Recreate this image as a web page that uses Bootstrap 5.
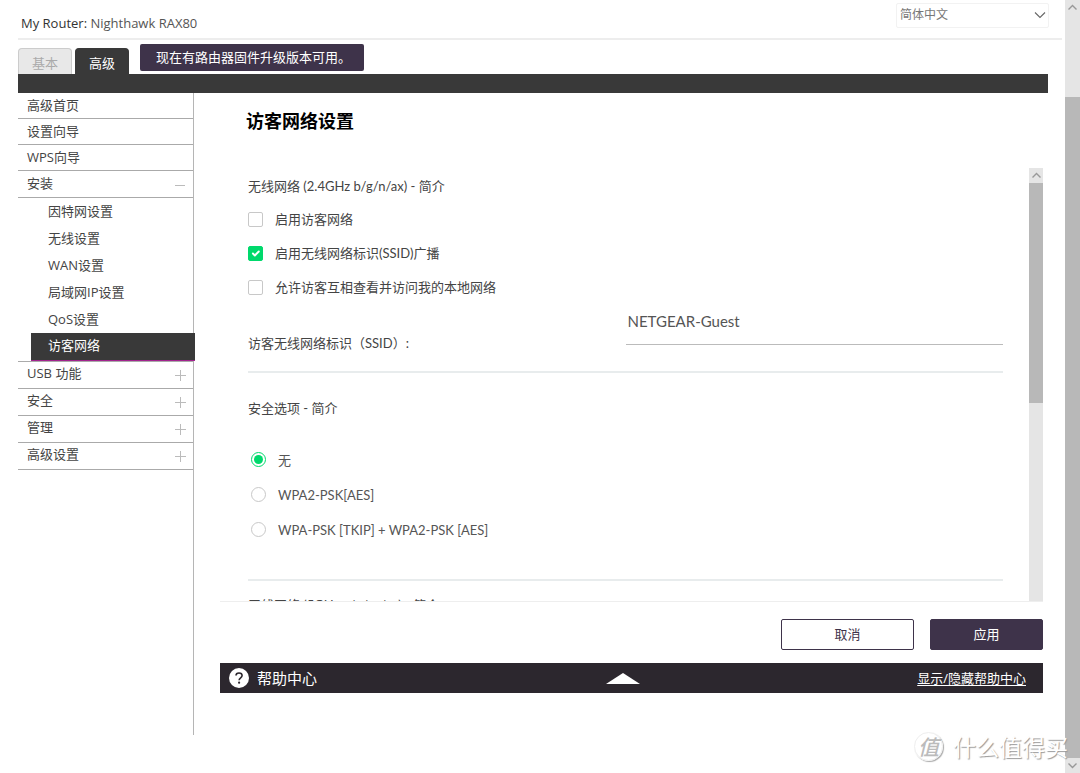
<!DOCTYPE html>
<html lang="zh-CN">
<head>
<meta charset="utf-8">
<meta name="viewport" content="width=device-width, initial-scale=1">
<title>NETGEAR Router</title>
<link href="https://cdn.jsdelivr.net/npm/bootstrap@5.3.0/dist/css/bootstrap.min.css" rel="stylesheet">
<style>
  :root { --plum: #3e334a; --coal: #393939; --green: #00d96c; }
  body { font: 13px/20px "Open Sans", "Noto Sans CJK SC", sans-serif; color: #444; background: #fff; }
  .shell { min-height: 100vh; }
  .pane { padding-left: 18px; padding-bottom: 38px; }

  .topbar { height: 40px; margin-right: 3px; padding: 3px 13px 10px 3px; border-bottom: 2px solid #ededed; }
  .topbar .model { padding-top: 10px; color: #333; }
  .topbar .model span { color: #555; }
  .lang { width: 153px; height: 25px; padding: 0 24px 2px 3px; font-size: 12px; color: #777; border: 1px solid #f2f2f2; border-radius: 2px;
    background-image: url("data:image/svg+xml,%3Csvg xmlns='http://www.w3.org/2000/svg' viewBox='0 0 12 12'%3E%3Cpath d='M1 3.5l5 5 5-5' fill='none' stroke='%23666' stroke-width='1.1'/%3E%3C/svg%3E");
    background-size: 12px 12px; background-position: right 2px top 5px; }

  .strip { margin-right: 17px; padding-top: 4px; border-bottom: 19px solid var(--coal); }
  .tab { width: 54px; height: 26px; margin-right: 3px; padding: 2px 0 0; border: 1px solid #ccc; border-bottom: 0; border-radius: 4px 4px 0 0; background: #e8e8e8; color: #aaa; }
  .tab.on { background: var(--coal); border-color: var(--coal); color: #fff; }
  .notice { width: 224px; height: 27px; margin: 0 0 3px 8px; padding: 3px 0 3px 16px; border-radius: 2px; background: var(--plum); color: #fff; }

  .side { width: 176px; border-right: 1px solid #b5b5b5; }
  .side a { display: flex; justify-content: space-between; align-items: center; color: #444; text-decoration: none; }
  .side .top { height: 26px; padding: 0 7px 2px 9px; border-bottom: 1px solid #aaa; }
  .side .group { height: 27px; }
  .side .group ~ .group { padding-bottom: 4px; }
  .side .after { height: 28px; border-top: 1px solid #aaa; }
  .side .sub { height: 27px; padding-left: 30px; padding-bottom: 2px; }
  .side .sub.on { height: 28px; margin-left: 13px; margin-right: -2px; padding-left: 17px; padding-bottom: 4px; background: var(--coal); border-bottom: 1px solid #a3238e; color: #fff; position: relative; }
  .side svg { width: 11px; height: 11px; margin-top: 4px; stroke: #bbb; fill: none; }

  .work { margin-left: 26px; margin-right: 22px; }
  .work h1 { height: 75px; margin: 0; padding: 14px 0 0 26px; font-size: 18px; line-height: 28px; font-weight: 700; color: #000; }
  .scroller { height: 434px; border-bottom: 1px solid #eee; }
  .fields { font-family: Lato, "Noto Sans CJK SC", sans-serif; padding: 0 26px 0 28px; }
  .fields h2 { margin: 0; font-size: 13px; line-height: 36px; font-weight: 400; }
  .fields .band { height: 34px; }
  .opt { height: 34px; }
  .opt .form-check-input { width: 15px; height: 15px; margin: 0 12px 0 0; border: 1px solid #c8c8c8; }
  .opt .form-check-input[type=checkbox] { border-radius: 2px; }
  .opt .form-check-input:checked { background-color: var(--green); border-color: var(--green); }
  .opt .form-check-input[type=radio]:checked { background: var(--green); background-clip: content-box; padding: 2px; }
  .radios { padding: 16px 0 32px 3px; color: #555; }
  .radios .opt { height: 35px; }
  .ssid { height: 69px; border-bottom: 2px solid #e8eced; }
  .ssid label { padding-top: 29px; }
  .ssid input { height: 41px; padding: 0 2px 7px; border: 0; border-bottom: 1px solid #bbb; border-radius: 0; font-size: 15px; color: #555; }
  .security { border-bottom: 2px solid #e8eced; padding-top: 17px; }
  .fields .next-band { line-height: 48px; }

  .bar { width: 14px; background: #e5e5e5; }
  .bar.outer { width: 15px; }
  .bar .thumb { background: #b8b8b8; }
  .bar svg { width: 9px; height: 15px; stroke: #999; fill: none; stroke-width: 1.4; }
  .h-inner { height: 220px; }
  .outer .gap-top { height: 82px; }

  .actions { padding: 17px 0 13px; gap: 16px; }
  .actions .btn { height: 31px; padding: 0; font-size: 13px; border-radius: 2px; border: 1px solid var(--plum); color: var(--plum); width: 133px; }
  .actions .go { width: 113px; background: var(--plum); color: #fff; }
  .help { height: 30px; padding: 0 17px 0 9px; background: #2c272e; color: #fff; }
  .help .name { font-size: 15px; }
  .help a { color: #fff; text-underline-offset: 2px; }
  .help .side-cell { flex: 1 1 0; }
  .help .toggle { margin-right: 10px; }

  .mark-zdm { right: 12px; bottom: 10px; gap: 10px; color: #fff; font: 23px/34px "Noto Sans CJK SC", sans-serif; text-shadow: 1px 1px 1px #999; pointer-events: none; }
  .mark-zdm .seal { width: 29px; height: 29px; border-radius: 50%; border: 1px solid #eee; box-shadow: 1px 1px 1px #aaa; color: #bbb; text-shadow: none; font-size: 21px; line-height: 27px; font-style: italic; font-weight: 500; }
</style>
</head>
<body>
<div class="shell d-flex position-relative">
  <div class="pane d-flex flex-column flex-grow-1">
    <header class="topbar d-flex justify-content-between">
      <div class="model">My Router: <span>Nighthawk RAX80</span></div>
      <select class="form-select lang" aria-label="语言"><option>简体中文</option><option>English</option></select>
    </header>

    <div class="strip d-flex align-items-end">
      <button type="button" class="tab">基本</button>
      <button type="button" class="tab on">高级</button>
      <div class="notice text-nowrap">现在有路由器固件升级版本可用。</div>
    </div>

    <div class="d-flex flex-grow-1">
      <nav class="side flex-shrink-0">
        <a class="top" href="#">高级首页</a>
        <a class="top" href="#">设置向导</a>
        <a class="top" href="#">WPS向导</a>
        <a class="top group" href="#">安装<svg viewBox="0 0 11 11"><path d="M0 5.5h10"/></svg></a>
        <a class="sub" href="#">因特网设置</a>
        <a class="sub" href="#">无线设置</a>
        <a class="sub" href="#">WAN设置</a>
        <a class="sub" href="#">局域网IP设置</a>
        <a class="sub" href="#">QoS设置</a>
        <a class="sub on" href="#" aria-current="page">访客网络</a>
        <a class="top group after" href="#">USB 功能<svg viewBox="0 0 11 11"><path d="M0 5.5h11M5.5 0v11"/></svg></a>
        <a class="top group" href="#">安全<svg viewBox="0 0 11 11"><path d="M0 5.5h11M5.5 0v11"/></svg></a>
        <a class="top group" href="#">管理<svg viewBox="0 0 11 11"><path d="M0 5.5h11M5.5 0v11"/></svg></a>
        <a class="top group" href="#">高级设置<svg viewBox="0 0 11 11"><path d="M0 5.5h11M5.5 0v11"/></svg></a>
      </nav>

      <main class="work flex-grow-1">
        <h1>访客网络设置</h1>
        <div class="scroller d-flex overflow-hidden">
          <form class="fields flex-grow-1">
            <h2 class="band">无线网络 (2.4GHz b/g/n/ax) - 简介</h2>
            <div class="opt d-flex align-items-center"><input class="form-check-input" type="checkbox" id="enable"><label for="enable">启用访客网络</label></div>
            <div class="opt d-flex align-items-center"><input class="form-check-input" type="checkbox" id="bcast" checked><label for="bcast">启用无线网络标识(SSID)广播</label></div>
            <div class="opt d-flex align-items-center"><input class="form-check-input" type="checkbox" id="local"><label for="local">允许访客互相查看并访问我的本地网络</label></div>
            <div class="ssid row g-0">
              <label class="col-6" for="ssid">访客无线网络标识（SSID）:</label>
              <div class="col-6"><input class="form-control" id="ssid" type="text" value="NETGEAR-Guest"></div>
            </div>
            <div class="security">
              <h2>安全选项 - 简介</h2>
              <div class="radios">
                <div class="opt d-flex align-items-center"><input class="form-check-input" type="radio" name="sec" id="none" checked><label for="none">无</label></div>
                <div class="opt d-flex align-items-center"><input class="form-check-input" type="radio" name="sec" id="wpa2"><label for="wpa2">WPA2-PSK[AES]</label></div>
                <div class="opt d-flex align-items-center"><input class="form-check-input" type="radio" name="sec" id="mixed"><label for="mixed">WPA-PSK [TKIP] + WPA2-PSK [AES]</label></div>
              </div>
            </div>
            <h2 class="next-band">无线网络 (5GHz a/n/ac/ax) - 简介</h2>
          </form>
          <div class="bar d-flex flex-column flex-shrink-0" aria-hidden="true">
            <svg class="mx-auto flex-shrink-0" viewBox="0 0 9 15"><path d="M.5 9.5l4-4 4 4"/></svg>
            <div class="thumb h-inner"></div>
          </div>
        </div>
        <div class="actions d-flex justify-content-end">
          <button type="button" class="btn">取消</button>
          <button type="button" class="btn go">应用</button>
        </div>
        <div class="help d-flex align-items-center">
          <div class="side-cell name d-flex align-items-center gap-2">
            <svg width="20" height="20" viewBox="0 0 20 20" aria-hidden="true"><circle cx="10" cy="10" r="10" fill="#fff"/><path d="M7 7.6C7 5.8 8.3 5 10 5s3.100 1 3.100 2.600c0 2.200-3 2.300-3 4.700" fill="none" stroke="#2c272e" stroke-width="1.600"/><circle cx="10.100" cy="14.700" r="1.100" fill="#2c272e"/></svg>
            帮助中心
          </div>
          <svg class="toggle" width="34" height="11" viewBox="0 0 34 11" aria-hidden="true"><path d="M0 11L17 0l17 11z" fill="#fff"/></svg>
          <div class="side-cell text-end"><a href="#">显示/隐藏帮助中心</a></div>
        </div>
      </main>
    </div>
  </div>

  <div class="bar outer d-flex flex-column flex-shrink-0" aria-hidden="true">
    <svg class="mx-auto flex-shrink-0" viewBox="0 0 9 15"><path d="M.5 9.500l4-4 4 4"/></svg>
    <div class="gap-top flex-shrink-0"></div>
    <div class="thumb flex-grow-1"></div>
    <svg class="mx-auto flex-shrink-0" viewBox="0 0 9 15"><path d="M.5 5.500l4 4 4-4"/></svg>
  </div>

  <div class="mark-zdm position-absolute d-flex align-items-center"><span class="seal text-center">值</span><span>什么值得买</span></div>
</div>
<script src="https://cdn.jsdelivr.net/npm/bootstrap@5.3.0/dist/js/bootstrap.bundle.min.js"></script>
</body>
</html>
